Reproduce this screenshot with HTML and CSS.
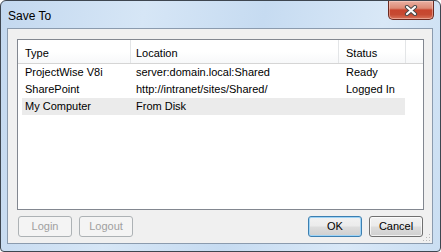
FILE: index.html
```html
<!DOCTYPE html>
<html>
<head>
<meta charset="utf-8">
<link rel="stylesheet" href="styles.css">
</head>
<body>
<div class="window">
  <div class="titlebar">
    <span class="title">Save To</span>
    <div class="close">
      <svg width="14" height="11" viewBox="0 0 14 11">
        <path d="M3 2 L11 9 M11 2 L3 9" stroke="#4a4a4a" stroke-width="4.2" stroke-linecap="round" fill="none"/>
        <path d="M3 2 L11 9 M11 2 L3 9" stroke="#ffffff" stroke-width="2.2" stroke-linecap="round" fill="none"/>
      </svg>
    </div>
  </div>
  <div class="client">
    <div class="list">
      <div class="header">
        <div class="hcell c1">Type</div>
        <div class="hcell c2">Location</div>
        <div class="hcell c3">Status</div>
        <div class="hcell filler"></div>
      </div>
      <div class="rows">
        <div class="row">
          <div class="cell c1">ProjectWise V8i</div>
          <div class="cell c2">server:domain.local:Shared</div>
          <div class="cell c3">Ready</div>
        </div>
        <div class="row">
          <div class="cell c1">SharePoint</div>
          <div class="cell c2">http://intranet/sites/Shared/</div>
          <div class="cell c3">Logged In</div>
        </div>
        <div class="row selected">
          <div class="cell c1">My Computer</div>
          <div class="cell c2">From Disk</div>
          <div class="cell c3"></div>
        </div>
      </div>
    </div>
    <div class="buttons">
      <div class="group">
        <button class="btn" disabled>Login</button>
        <button class="btn" disabled>Logout</button>
      </div>
      <div class="group">
        <button class="btn default">OK</button>
        <button class="btn">Cancel</button>
      </div>
    </div>
    <svg class="grip" width="8" height="8" viewBox="0 0 8 8">
      <rect x="6" y="0" width="1" height="1" fill="#b8b8b8"/>
      <rect x="3" y="3" width="1" height="1" fill="#b8b8b8"/>
      <rect x="6" y="3" width="1" height="1" fill="#b8b8b8"/>
      <rect x="0" y="6" width="1" height="1" fill="#b8b8b8"/>
      <rect x="3" y="6" width="1" height="1" fill="#b8b8b8"/>
      <rect x="6" y="6" width="1" height="1" fill="#b8b8b8"/>
    </svg>
  </div>
</div>
</body>
</html>
```

FILE: styles.css
```css
html, body {
  margin: 0;
  padding: 0;
  background: #ffffff;
}

.window {
  width: 441px;
  height: 252px;
  box-sizing: border-box;
  border: 1px solid #3e4650;
  border-radius: 6px 6px 4px 4px;
  background: linear-gradient(100deg, #c3d8ef 0%, #d6e6f6 30%, #c6dbf1 55%, #d9e8f7 80%, #cadef2 100%);
  display: flex;
  flex-direction: column;
  padding: 0 7px 7px 6px;
  font-family: "Liberation Sans", Arial, sans-serif;
  font-size: 11px;
  color: #000;
  overflow: hidden;
}

.titlebar {
  height: 27px;
  display: flex;
  justify-content: space-between;
  align-items: flex-start;
  flex: none;
}

.title {
  font-family: "Liberation Sans", Arial, sans-serif;
  font-size: 12px;
  line-height: 14px;
  padding-top: 8px;
  padding-left: 1px;
  color: #000;
}

.close {
  width: 46px;
  height: 19px;
  box-sizing: border-box;
  border: 1px solid #6b2a20;
  border-top: none;
  border-radius: 0 0 5px 5px;
  background: linear-gradient(180deg, #eab0a2 0%, #dd8a75 40%, #c8452e 50%, #c64a32 75%, #d8735a 100%);
  box-shadow: inset 0 0 0 1px rgba(255, 220, 210, 0.45);
  display: flex;
  align-items: center;
  justify-content: center;
  margin-right: -1px;
}

.client {
  position: relative;
  flex: 1;
  border: 1px solid #8b9bae;
  background: #f0f0f0;
  display: flex;
  flex-direction: column;
  padding: 10px 8px 6px 9px;
}

.list {
  height: 171px;
  box-sizing: border-box;
  border: 1px solid #828790;
  background: #ffffff;
  flex: none;
}

.header {
  display: flex;
  height: 23px;
  border-bottom: 1px solid #d5d5d5;
  background: linear-gradient(180deg, #ffffff 0%, #ffffff 50%, #f7f8f9 100%);
}

.hcell {
  box-sizing: border-box;
  border-right: 1px solid #e3e5e7;
  padding-top: 5px;
  line-height: 17px;
  white-space: nowrap;
}

.hcell.c1 { width: 113px; padding-left: 7px; }
.hcell.c2 { width: 208px; padding-left: 5px; }
.hcell.c3 { width: 67px; padding-left: 7px; }
.hcell.filler { flex: 1; border-right: none; }

.rows {
  padding-left: 4px;
}

.row {
  display: flex;
  width: 383px;
  height: 17px;
  line-height: 17px;
}

.row.selected {
  background: #ebebeb;
}

.cell {
  box-sizing: border-box;
  white-space: nowrap;
}

.cell.c1 { width: 109px; padding-left: 3px; }
.cell.c2 { width: 208px; padding-left: 5px; }
.cell.c3 { flex: 1; padding-left: 7px; }

.buttons {
  display: flex;
  justify-content: space-between;
  margin: 6px 1px 0 1px;
}

.group {
  display: flex;
  gap: 7px;
}

.btn {
  width: 54px;
  height: 21px;
  box-sizing: border-box;
  border: 1px solid #707070;
  border-radius: 3px;
  background: linear-gradient(180deg, #f2f2f2 0%, #ebebeb 48%, #dddddd 52%, #cfcfcf 100%);
  box-shadow: inset 0 0 0 1px rgba(255, 255, 255, 0.7);
  font-family: "Liberation Sans", Arial, sans-serif;
  font-size: 11px;
  color: #000;
  padding: 0;
  line-height: 19px;
}

.btn:disabled {
  border-color: #adb2b5;
  background: #f4f4f4;
  box-shadow: none;
  color: #a0a0a0;
}

.btn.default {
  border-color: #3c7fb1;
  box-shadow: inset 0 0 0 1px #9fd4f6;
  background: linear-gradient(180deg, #f2f2f2 0%, #ebebeb 48%, #dddddd 52%, #cfcfcf 100%);
}

.grip {
  position: absolute;
  right: 1px;
  bottom: 1px;
}
```
